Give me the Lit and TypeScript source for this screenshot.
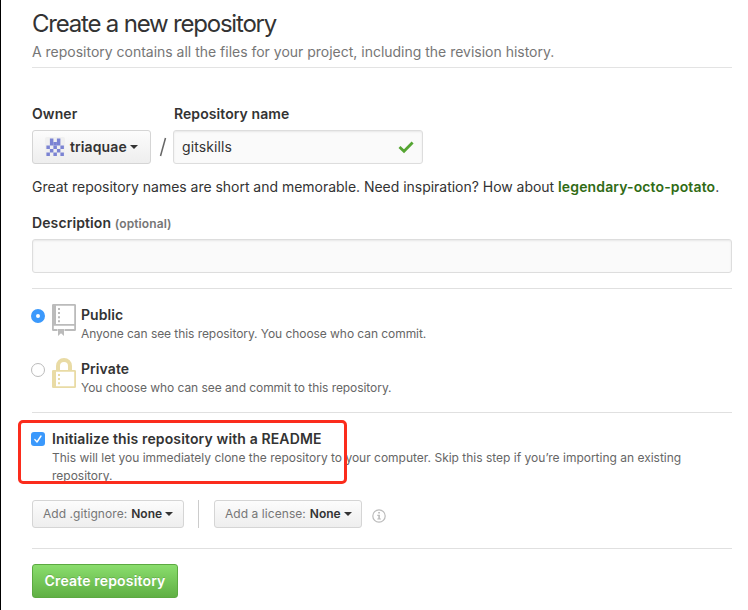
import { LitElement, html, svg, css } from "lit";
import { customElement } from "lit/decorators.js";

const identicon = [".X.X.", ".XXX.", "X.X.X", ".X.X.", "X.X.X"];

const repoIcon = svg`<svg width="24" height="32" viewBox="0 0 24 32" fill="#bbb">
  <path fill-rule="evenodd" d="M1.3 0H22.7Q24 0 24 1.3V25.7Q24 27 22.7 27H12.5V25H22.2V21.8H1.8V25H5.5V27H1.3Q0 27 0 25.7V1.3Q0 0 1.3 0ZM4 1.8V20H22.2V1.8Z" />
  <path d="M6 4h2v2H6zM6 8h2v2H6zM6 12.2h2v2H6zM6 16.3h2v2H6zM6 25h6V32L9 29.2 6 32z" />
</svg>`;

const lockIcon = svg`<svg width="24" height="30" viewBox="0 0 24 30" fill="#e9dba5">
  <path d="M6 13V8a6 6 0 0 1 12 0V13" fill="none" stroke="#e9dba5" stroke-width="4" />
  <path fill-rule="evenodd" d="M1.3 12H22.7Q24 12 24 13.3V28.7Q24 30 22.7 30H1.3Q0 30 0 28.7V13.3Q0 12 1.3 12ZM4 13.8V28.2H22.2V13.8Z" />
  <path d="M6 16h2v2H6zM6 20h2v2H6zM6 24.2h2v2H6z" />
</svg>`;

@customElement("app-root")
export class AppRoot extends LitElement {
  static styles = css`
    :host { display: block; position: relative; box-sizing: border-box; width: 748px; height: 610px; overflow: hidden; background: #fff; border-left: 1px solid #000; padding: 0 16px 0 31px; font: 14px/20px Inter, "Liberation Sans", sans-serif; color: #333; }
    * { box-sizing: border-box; }
    span { white-space: nowrap; }
    svg { display: block; flex: none; }
    .head { height: 68px; border-bottom: 1px solid #e3e3e3; padding-top: 7px; }
    h1 { margin: 0; font-size: 24px; font-weight: 400; line-height: 34px; letter-spacing: -1.2px; white-space: nowrap; }
    .sub { font-size: 14px; line-height: 22px; color: #767676; letter-spacing: -0.01px; }
    .labels { display: flex; margin-top: 36px; font-weight: 600; height: 20px; letter-spacing: 0.07px; }
    .labels .owner { width: 142px; }
    .fields { display: flex; margin-top: 6px; height: 34px; }
    .btn { display: flex; align-items: center; border: 1px solid #d5d5d5; border-radius: 3px; background: linear-gradient(#fcfcfc, #eee); font: inherit; color: #333; padding: 0; margin: 0; }
    .btn b { font-weight: 600; }
    .owner-btn { width: 119px; height: 34px; padding-left: 12px; }
    .owner-btn b { margin-left: 5px; letter-spacing: 0.1px; }
    .caret { border: 4px solid transparent; border-top-color: #333; border-bottom: 0; margin-left: 3px; }
    .slash { width: 22px; padding-left: 1px; display: flex; align-items: center; justify-content: center; }
    .input { display: flex; align-items: center; border: 1px solid #ddd; border-radius: 3px; background: #fafafa; box-shadow: inset 0 1px 2px rgba(0,0,0,.075); height: 34px; }
    .name { width: 250px; padding: 0 8px 0 8px; justify-content: space-between; }
    .name span { letter-spacing: 0.1px; }
    .hint { height: 20px; margin-top: 13px; white-space: nowrap; letter-spacing: -0.025px; }
    .hint b { color: #306b15; font-weight: 600; letter-spacing: 0.13px; }
    .desc { margin-top: 16px; height: 20px; font-weight: 600; white-space: nowrap; letter-spacing: 0.1px; }
    .desc small { font-size: 12px; color: #767676; font-weight: 600; }
    .desc-in { margin-top: 6px; }
    .rule { height: 1px; background: #e0e0e0; }
    .r1 { margin-top: 15px; }
    .choice { display: flex; height: 54px; }
    .c1 { padding-top: 15px; height: 69px; }
    .radio { width: 14px; height: 14px; border-radius: 50%; border: 1px solid #bbb; background: #fff; margin: 5px 7px 0 -1px; flex: none; }
    .radio.on { border: 5px solid #3b99fc; }
    .icon { width: 29px; flex: none; }
    .title { font-weight: 600; line-height: 22px; display: block; letter-spacing: 0.07px; }
    .note { font-size: 12px; line-height: 16px; color: #666; display: block; letter-spacing: -0.06px; }
    .init { display: flex; height: 74px; padding-top: 15px; }
    .check { width: 14px; height: 14px; border-radius: 3px; background: #3b99fc; margin: 4px 7px 0 -1px; flex: none; }
    .init .title { letter-spacing: 0.13px; }
    .init .note { line-height: 18px; letter-spacing: -0.005px; margin-top: -1px; }
    .mark { position: absolute; left: 17px; top: 420px; width: 329px; height: 64px; border: 3px solid #fb2c1c; border-radius: 5px; }
    .opts { display: flex; margin-top: 13px; height: 28px; font-size: 12px; color: #767676; }
    .opts .btn { height: 28px; padding-left: 10px; color: #767676; }
    .opts span { margin-right: 4px; letter-spacing: 0.06px; }
    .opts b { color: #333; }
    .gi { width: 152px; }
    .li { width: 148px; }
    .sep { width: 1px; background: #ccc; margin: 0 15px 0 14px; }
    .info { margin: 9px 0 0 10px; }
    .r3 { margin-top: 20px; }
    .create { margin-top: 15px; width: 146px; height: 34px; border: 1px solid #5ca941; border-radius: 3px; background: linear-gradient(#8add6d, #60b044); color: #fff; font-weight: 600; display: flex; align-items: center; justify-content: center; text-shadow: 0 -1px 0 rgba(0,0,0,.15); font-size: 14px; font-family: inherit; padding: 0 0 1px; white-space: nowrap; letter-spacing: 0.17px; }
  `;

  render() {
    return html`
      <div class="head"><h1>Create a new repository</h1>
        <div class="sub"><span>A repository contains all the files for your project, including the revision history.</span></div></div>
      <div class="labels"><span class="owner">Owner</span><span>Repository name</span></div>
      <div class="fields">
        <button class="btn owner-btn">
          <svg width="20" height="20" viewBox="0 0 20 20">
            <rect width="20" height="20" rx="2" fill="#f0f0f0" />
            ${identicon.map((row, y) => [...row].map((c, x) => c === "X" ? svg`<rect x=${1.4 + x * 3.5} y=${1.5 + y * 3.5} width="3.5" height="3.5" fill="#7b83d3" />` : ""))}
          </svg>
          <b>triaquae</b><i class="caret"></i>
        </button>
        <div class="slash"><svg width="8" height="20" viewBox="0 0 8 20"><path d="M1.5 19 6.5 1" stroke="#666" stroke-width="1.5" /></svg></div>
        <div class="input name"><span>gitskills</span>
          <svg width="16" height="14" viewBox="0 0 16 14"><path d="M1.5 7 6 11.3 14.6 2.5" fill="none" stroke="#55a532" stroke-width="2.8" /></svg></div>
      </div>
      <div class="hint"><span>Great repository names are short and memorable. Need inspiration? How about </span><b>legendary-octo-potato</b>.</div>
      <div class="desc">Description <small>(optional)</small></div>
      <div class="input desc-in"></div>
      <div class="rule r1"></div>
      <div class="choice c1"><i class="radio on"></i><div class="icon">${repoIcon}</div>
        <div><span class="title">Public</span><span class="note">Anyone can see this repository. You choose who can commit.</span></div></div>
      <div class="choice"><i class="radio"></i><div class="icon">${lockIcon}</div>
        <div><span class="title">Private</span><span class="note">You choose who can see and commit to this repository.</span></div></div>
      <div class="rule"></div>
      <div class="init"><i class="check"><svg width="14" height="14" viewBox="0 0 14 14"><path d="M3.9 7.6 6 10 10 4" fill="none" stroke="#fff" stroke-width="1.4" stroke-linecap="round" stroke-linejoin="round" /></svg></i>
        <div><span class="title">Initialize this repository with a README</span><span class="note">This will let you immediately clone the repository to your computer. Skip this step if you’re importing an existing<br />repository.</span></div></div>
      <div class="opts">
        <button class="btn gi"><span>Add .gitignore:</span><b>None</b><i class="caret"></i></button>
        <i class="sep"></i>
        <button class="btn li"><span>Add a license:</span><b>None</b><i class="caret"></i></button>
        <svg class="info" width="14" height="14" viewBox="0 0 14 14"><circle cx="7" cy="7" r="6.2" fill="none" stroke="#bbb" stroke-width="1.2" /><path d="M6.2 3h1.7v1.6H6.2zM5.3 5.8h2.6v3.7h1v1.1H5.3V9.5h1V6.9h-1z" fill="#bbb" /></svg>
      </div>
      <div class="rule r3"></div>
      <button class="create">Create repository</button>
      <div class="mark"></div>
    `;
  }
}
